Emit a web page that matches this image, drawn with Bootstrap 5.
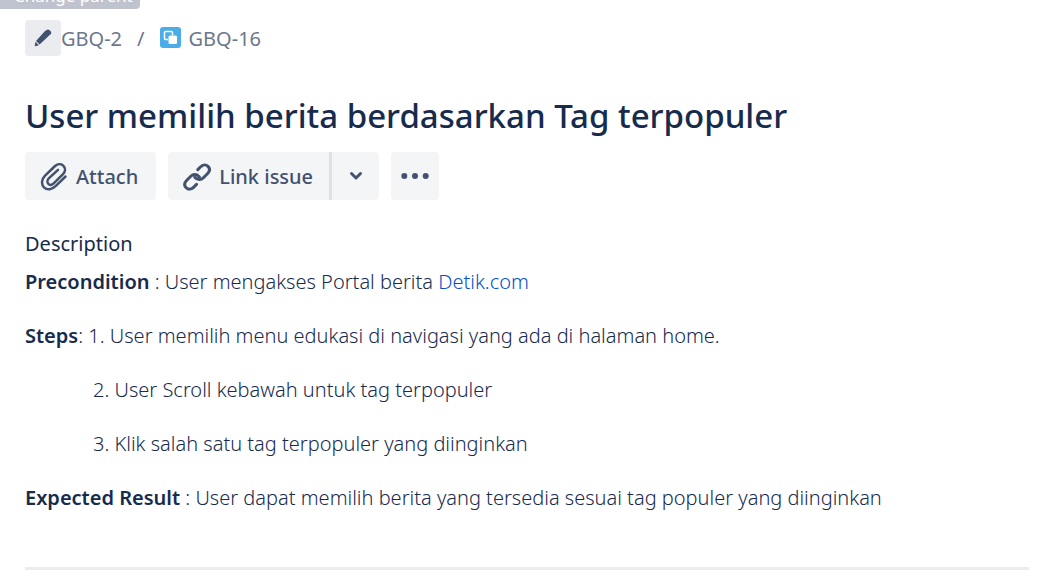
<!DOCTYPE html>
<html lang="id">
<head>
<meta charset="utf-8">
<meta name="viewport" content="width=device-width, initial-scale=1">
<title>GBQ-16 User memilih berita berdasarkan Tag terpopuler</title>
<link href="https://cdn.jsdelivr.net/npm/bootstrap@5.3.0/dist/css/bootstrap.min.css" rel="stylesheet">
<style>
  :root { --ink: #172b4d; --icon: #42526e; --soft: #f4f5f7; }
  body { font-family: "Noto Sans", "Open Sans", sans-serif; font-size: 20px; font-weight: 300; line-height: 30px; color: var(--ink); }
  .issue { padding: 20px 14px 0 25px; }
  .tip { position: absolute; top: -20px; left: -8px; width: 148px; height: 29px; padding: 0 8px 0 22px; border-radius: 4px; background: #bfc3ce; color: #fff; font-size: 17px; font-weight: 400; line-height: 32px; white-space: nowrap; }
  .crumbs a, .crumbs span { color: #6b778c; font-weight: 400; text-decoration: none; }
  .crumbs > a, .crumbs > span { padding-top: 2px; }
  .edit-btn { width: 36px; height: 36px; padding: 0; border-radius: 4px; background: #ebecf0; }
  .crumb-sep { margin: 0 15px; }
  .issue-title { margin: 36px 0 12px; font-size: 33px; font-weight: 500; line-height: 48px; }
  .tool-row { gap: 12px; }
  .tool-btn { display: flex; align-items: center; justify-content: center; height: 48px; gap: 8px; border: 0; border-radius: 4px; padding: 2px 18px 0 15px; background: var(--soft); color: var(--icon); font-size: 20px; font-weight: 500; line-height: 30px; }
  .tool-btn:hover, .tool-btn:focus { background: #ebecf0; color: var(--icon); }
  .tool-btn.square-btn { width: 48px; padding: 0; }
  .tool-btn.split-line { width: 50px; border-left: 3px solid #dfe1e6; }
  .tool-btn.link-btn { padding-right: 16px; }
  .section-title { margin: 29px 0 8px; font-size: 20px; font-weight: 400; line-height: 30px; }
  .issue-text p { margin: 0 0 24px; }
  .issue-text strong { font-weight: 600; }
  .issue-text a { color: #0052cc; text-decoration: none; }
  .issue-text .step-item { padding-left: 68px; }
  .issue-line { margin: 54px 0 0; border-top: 3px solid #ebecf0; opacity: 1; }
</style>
</head>
<body>
<div class="tip" role="tooltip">Change parent</div>
<main class="issue">
  <nav class="crumbs d-flex align-items-center" aria-label="Breadcrumb">
    <button type="button" class="btn edit-btn d-flex align-items-center justify-content-center" aria-label="Change parent">
      <svg width="18" height="18" viewBox="0 0 18 18" fill="#42526e"><path d="M10.8 2.3 12.6.9Q14-.1 15.4 1.1L16.6 2.3Q17.8 3.7 16.8 5.1L5.6 15.6 2 11.9ZM1.5 12.8 4.9 16.2 1.5 17.3Q.7 17.4.7 16.5Z"/></svg>
    </button>
    <a href="#">GBQ-2</a>
    <span class="crumb-sep">/</span>
    <a href="#" class="d-flex align-items-center gap-2">
      <svg class="mb-1" width="21" height="21" viewBox="0 0 21 21"><rect width="21" height="21" rx="3" fill="#4bade8"/><path d="M8 12.5H5.5a1 1 0 0 1-1-1v-6a1 1 0 0 1 1-1h6a1 1 0 0 1 1 1V8" fill="none" stroke="#fff" stroke-width="1.5"/><rect x="8.5" y="8.5" width="8.5" height="8.5" rx="1.5" fill="#fff"/></svg>
      GBQ-16
    </a>
  </nav>

  <h1 class="issue-title">User memilih berita berdasarkan Tag terpopuler</h1>

  <div class="tool-row d-flex flex-wrap">
    <button type="button" class="btn tool-btn">
      <svg width="28" height="28" viewBox="0 0 28 28" fill="none" stroke="#42526e" stroke-width="2.5" stroke-linecap="round" stroke-linejoin="round"><path d="M25.5 13.5 15.6 23.2C12.2 26.6 7.2 27.5 4 24.3 .8 21.1 1.7 16.1 5.1 12.7L14.5 3.5C17.4.7 21.1.5 23.4 2.8S25.6 8.5 22.8 11.4L13.7 20.4C11.8 22.3 9.8 22.3 8.4 20.9S7.1 17.1 9 15.2L18 6.8"/></svg>
      Attach
    </button>
    <div class="d-flex">
      <button type="button" class="btn tool-btn link-btn rounded-end-0">
        <svg width="28" height="28" viewBox="0 0 28 28" fill="none" stroke="#42526e" stroke-width="3" stroke-linecap="round" stroke-linejoin="round"><path d="M14.8 6.6 17.4 4C20 1.4 23 1.4 25 3.4S27 8.2 24.4 10.8L20.4 14.8C17.8 17.4 14.4 17.1 11.8 14.2"/><path d="M13.5 21.4 10.8 24.1C8.2 26.7 5.2 26.7 3.2 24.7S1.2 19.9 3.8 17.3L7.8 13.3C10.4 10.7 13.8 11 16.4 13.9"/></svg>
        Link issue
      </button>
      <button type="button" class="btn tool-btn square-btn split-line rounded-start-0" aria-label="More link options">
        <svg width="14" height="10" viewBox="0 0 14 10" fill="none" stroke="#42526e" stroke-width="3" stroke-linecap="round" stroke-linejoin="round"><path d="M2.5 2.5 7 7 11.5 2.5"/></svg>
      </button>
    </div>
    <button type="button" class="btn tool-btn square-btn" aria-label="More actions">
      <svg width="28" height="6" viewBox="0 0 28 6" fill="#42526e"><circle cx="3.3" cy="3" r="3"/><circle cx="14" cy="3" r="3"/><circle cx="24.7" cy="3" r="3"/></svg>
    </button>
  </div>

  <h2 class="section-title">Description</h2>
  <div class="issue-text">
    <p><strong>Precondition</strong> : User mengakses Portal berita <a href="#">Detik.com</a></p>
    <p><strong>Steps</strong>: 1. User memilih menu edukasi di navigasi yang ada di halaman home.</p>
    <p class="step-item">2. User Scroll kebawah untuk tag terpopuler</p>
    <p class="step-item">3. Klik salah satu tag terpopuler yang diinginkan</p>
    <p><strong>Expected Result</strong> : User dapat memilih berita yang tersedia sesuai tag populer yang diinginkan</p>
  </div>
  <hr class="issue-line">
</main>
<script src="https://cdn.jsdelivr.net/npm/bootstrap@5.3.0/dist/js/bootstrap.bundle.min.js"></script>
</body>
</html>
